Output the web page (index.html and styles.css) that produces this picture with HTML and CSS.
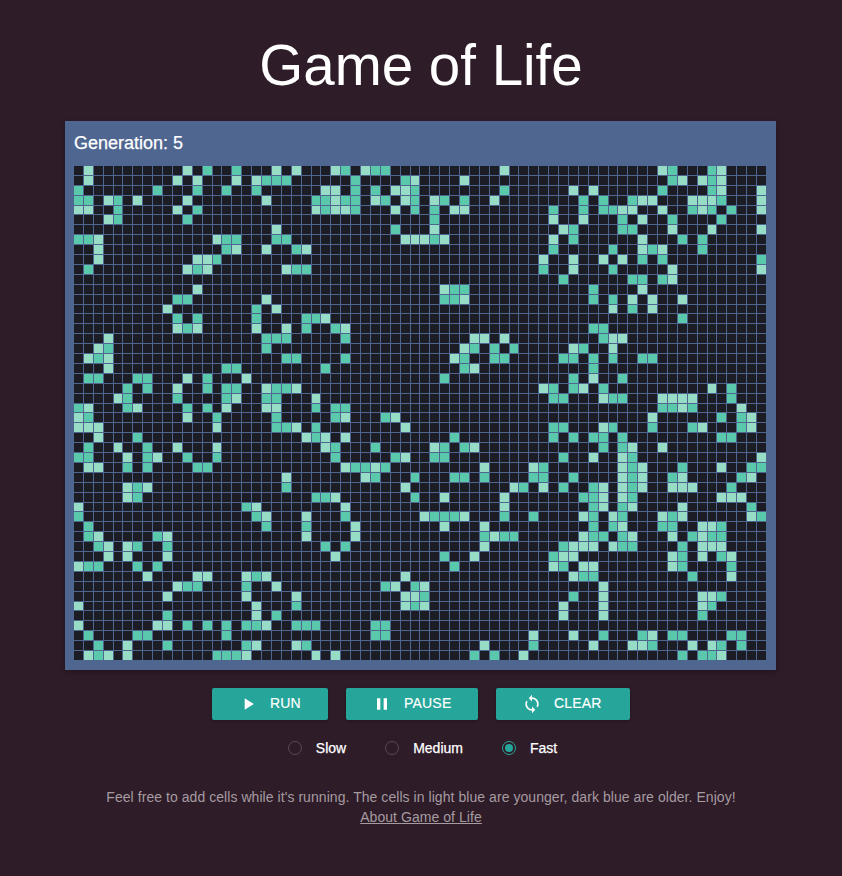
FILE: index.html
```html
<!DOCTYPE html>
<html lang="en">
<head>
<meta charset="utf-8">
<title>Game of Life</title>
<link rel="stylesheet" href="styles.css">
</head>
<body>
<main class="page">
  <h1 class="title">Game of Life</h1>
  <section class="board">
    <div class="generation">Generation: 5</div>
    <div class="grid" id="grid"></div>
  </section>
  <div class="controls">
    <button class="btn btn-run" type="button">
      <svg class="icon" viewBox="0 0 24 24"><path d="M8 5v14l11-7z"/></svg><span class="btn-text">RUN</span>
    </button>
    <button class="btn btn-pause" type="button">
      <svg class="icon" viewBox="0 0 24 24"><path d="M6 19h4V5H6v14zm8-14v14h4V5h-4z"/></svg><span class="btn-text">PAUSE</span>
    </button>
    <button class="btn btn-clear" type="button">
      <svg class="icon" viewBox="0 0 24 24"><path d="M12 4V1L8 5l4 4V6c3.31 0 6 2.69 6 6 0 1.01-.25 1.97-.7 2.8l1.46 1.46C19.54 15.03 20 13.57 20 12c0-4.42-3.58-8-8-8zm0 14c-3.31 0-6-2.69-6-6 0-1.01.25-1.97.7-2.8L5.24 7.74C4.46 8.97 4 10.43 4 12c0 4.42 3.58 8 8 8v3l4-4-4-4v3z"/></svg><span class="btn-text">CLEAR</span>
    </button>
  </div>
  <div class="speeds">
    <div class="speed"><span class="radio"></span><span class="speed-label">Slow</span></div>
    <div class="speed"><span class="radio"></span><span class="speed-label">Medium</span></div>
    <div class="speed"><span class="radio radio-on"></span><span class="speed-label">Fast</span></div>
  </div>
  <p class="note">Feel free to add cells while it's running. The cells in light blue are younger, dark blue are older. Enjoy!<br><a class="about" href="#">About Game of Life</a></p>
</main>
<script src="script.js"></script>
</body>
</html>
```
FILE: styles.css
```css
* { box-sizing: border-box; }
html, body { margin: 0; padding: 0; }
body {
  background: #2e1c28;
  font-family: "Liberation Sans", Arial, sans-serif;
  color: #fff;
  min-height: 876px;
}
.page {
  display: flex;
  flex-direction: column;
  align-items: center;
}
.title {
  margin: 29px 0 0;
  font-size: 56.5px;
  line-height: 73px;
  font-weight: 400;
  color: #fff;
  text-align: center;
}
.board {
  width: 711px;
  height: 549px;
  margin: 19px 0 0 -1px;
  padding: 0 10px 0 9px;
  background: #4e6690;
  box-shadow: 0 2px 5px rgba(0, 0, 0, .26);
}
.generation {
  height: 45px;
  font-size: 18px;
  line-height: 45px;
  color: #fff;
  -webkit-text-stroke: .25px #fff;
}
.grid {
  width: 692px;
  height: 494px;
  display: grid;
  grid-template-columns: repeat(70, 1fr);
  grid-template-rows: repeat(50, 1fr);
  gap: 1px;
}
.cell { background: #1c1c24; }
.cell.a { background: #5ac8ab; }
.cell.b { background: #97dcc4; }
.controls {
  display: flex;
  gap: 18px;
  margin-top: 18px;
}
.btn {
  display: flex;
  align-items: center;
  gap: 12px;
  height: 32px;
  padding: 0 0 0 26px;
  border: 0;
  border-radius: 2px;
  background: #26a69a;
  color: #fff;
  font-family: inherit;
  font-size: 14px;
  letter-spacing: .2px;
  box-shadow: 0 1px 3px rgba(0, 0, 0, .25);
}
.btn-text { margin-bottom: 2px; -webkit-text-stroke: .15px #fff; }
.btn-run { width: 116px; }
.btn-pause { width: 132px; }
.btn-clear { width: 134px; }
.icon { width: 20px; height: 20px; fill: #fff; flex: none; }
.speeds {
  display: flex;
  gap: 39px;
  margin: 18px 0 0 3px;
  height: 20px;
  align-items: center;
}
.speed {
  display: flex;
  align-items: center;
  gap: 14px;
  font-size: 14px;
  line-height: 20px;
  color: #fff;
}
.speed-label { -webkit-text-stroke: .25px #fff; }
.radio {
  width: 14px;
  height: 14px;
  border: 1px solid #5a4a54;
  border-radius: 50%;
  display: flex;
  align-items: center;
  justify-content: center;
}
.radio-on { border-color: #26a69a; }
.radio-on::after {
  content: "";
  width: 8px;
  height: 8px;
  border-radius: 50%;
  background: #26a69a;
}
.note {
  margin: 29px 0 0;
  text-align: center;
  font-size: 14px;
  line-height: 20px;
  letter-spacing: .055px;
  color: #a59ba1;
}
.about { color: #a59ba1; text-decoration: underline; }
```
FILE: script.js
```js
var rows = [
"b1 b11 a13 a16 b20 b22 b26 a27 b29 a30 a31 b43 b59 a60 a64 b65",
"b1 b10 b12 b16 b18 a19 a20 a21 a28 a33 b34 b39 a60 b61 b63 a64 b65",
"a0 a8 a12 a15 a18 b25 b26 a28 a30 b32 b33 a34 a43 b50 b52 a59 a64 b65 b69",
"a0 a1 b3 a4 b6 b11 b19 a24 a25 b26 a27 a28 b30 a31 b33 a34 b36 a37 a39 b42 a51 a53 a56 b57 b58 b62 b63 b64 a65 b69",
"b0 b1 a4 b10 a12 b24 a25 b26 b27 a28 b32 a34 a36 b38 b39 a48 a51 a53 a54 b55 b56 b59 a62 b63 a64 a66 b69",
"b3 a4 a11 a36 b48 b51 a55 b57 a60 a65",
"b20 a32 b36 b49 a50 a55 a56 b60 b64 b69",
"a0 a1 b2 b14 a15 a16 a20 a21 b33 b34 b35 a36 b37 b48 a50 b57 a61 a63",
"b2 a15 b16 b19 a22 b23 a48 a54 b57 a58 b59 a63",
"b2 b12 b13 a14 b47 b50 b53 b55 a57 a59 a69",
"a1 b11 a12 b13 b21 a22 a23 a47 b50 a54 b60 b69",
"a49 a56 a57 a59 b60",
"b12 b37 a38 a39 a52 b57",
"a10 a11 b19 a37 a38 b39 a52 a54 b56 b58 b61",
"b9 a18 b20 b54 a56 b58",
"a10 a12 a18 a23 a24 b25 a61",
"b10 a11 b12 b18 b21 a23 a26 b27 a52 a53",
"b3 a19 a20 a21 a27 b40 b41 b43 a53 b54 b55",
"b2 a3 a19 b39 a40 a42 a44 b50 a51 b54",
"b1 a2 b3 a21 a22 a27 b38 a39 a42 a43 a49 a50 a52 a54 a57 a58",
"b3 a15 a16 a25 a39 b40 a52",
"a1 a2 a6 a7 b11 a13 b17 a37 a50 b52 a55",
"a5 a7 b10 a13 a15 a16 b19 a20 a21 b22 b47 a48 a50 b51 a53 b64 a66",
"b4 a5 a10 a15 b16 a19 a20 b24 a48 a49 b53 a54 a55 b59 b60 b61 b62 a66",
"a0 b1 a5 b6 a11 a13 b15 b19 b20 a24 a26 a27 a59 a60 b61 a62 b67",
"b0 a1 b11 a14 a20 a26 b27 a31 b32 b58 a65 a67 b68",
"b0 b1 b2 b14 a20 a21 b22 a24 b33 a48 a49 b53 a54 a58 a62 b63 a67 b68",
"b2 a6 b23 a24 b25 b27 a38 a48 a50 a52 a53 a55 a65 a66",
"a1 b4 a7 b10 b14 b25 a26 a30 b36 a37 a39 b40 a53 a55 b56 b59",
"a0 a1 b5 a7 b8 a11 a14 a26 a32 b33 a36 a37 a49 b52 b55 a56 b69",
"b1 b2 a5 a7 a12 a13 b27 a28 a29 b30 a31 b41 b46 a47 b55 a56 b57 a61 b65 a68 a69",
"b21 b29 a30 a34 a38 a39 a41 a46 a47 a50 b55 a56 b57 a60 b61 a67 b68",
"b5 a6 b7 a21 b33 b44 a45 b47 a49 a52 b53 b55 a56 b57 b60 b61 b62 a66",
"b5 a6 a24 a25 b26 a34 b37 b43 a51 a52 b53 b55 a56 b65 b66 b67",
"b0 a17 b18 b27 b43 a52 b53 a55 b56 b61 a68",
"a0 a18 b19 b23 a27 b35 a36 a37 a38 b39 a43 a46 b51 a52 b54 a55 b59 a60 b61 b68 a69",
"a1 a19 a23 b28 b37 b41 a52 a54 b55 a59 a60 b63 b64 a65",
"a1 b2 a8 b9 b23 b28 a41 b42 a43 a44 b51 a52 a53 a55 b56 b60 a62 b63 a64 a65",
"a2 b3 b5 a6 a9 a25 a27 b41 a49 b50 b51 b52 b54 a55 a56 a61 b63 b64 b65",
"b3 b5 b9 b26 a37 b40 a48 b49 b50 b60 a61 b63 a65 b66",
"b0 a1 a2 a6 a8 a38 b48 a49 b51 b52 b60 a61 a66",
"b7 b12 b13 b17 a18 b19 b33 b50 a51 a52 a62 b66",
"b10 a11 a12 a17 b20 a31 b32 a34 b35 b53",
"b9 b17 b22 b33 b34 a35 a50 b53 b63 b64 a65",
"b0 b18 a22 b33 a34 b35 b49 b53 b63 a64",
"a9 b18 a20 b49 b53 a63",
"b0 b8 b9 a11 a13 a15 a17 a18 b19 a22 a23 a24 a30 a31",
"a1 a6 a7 a15 a30 a31 b46 b50 a53 a57 b58 a60 a61 a66 a67",
"a2 b5 a9 a17 b18 b22 a23 b41 a46 b52 b56 b57 a58 b62 b64 a65 a67",
"b1 a2 b3 b5 a14 a15 a16 b17 b24 b26 a40 a42 b45 a61 a63 a64 b65"
];
var grid = document.getElementById("grid");
var frag = document.createDocumentFragment();
rows.forEach(function (row) {
  var state = {};
  row.split(" ").forEach(function (tok) {
    if (tok) state[tok.slice(1)] = tok[0];
  });
  for (var c = 0; c < 70; c++) {
    var cell = document.createElement("div");
    cell.className = state[c] ? "cell " + state[c] : "cell";
    frag.appendChild(cell);
  }
});
grid.appendChild(frag);
```
